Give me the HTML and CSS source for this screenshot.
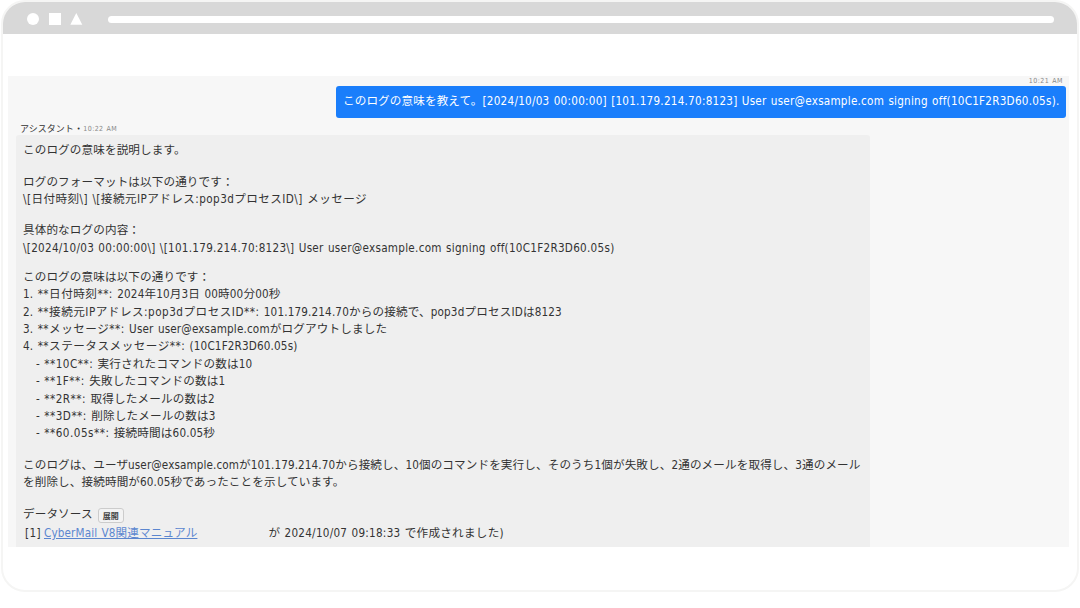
FILE: index.html
```html
<!DOCTYPE html>
<html lang="ja">
<head>
    <meta charset="UTF-8">
    <meta name="viewport" content="width=device-width, initial-scale=1.0">
    <title>アシスタント</title>
    <link rel="stylesheet" href="styles.css">
</head>
<body>
    <div class="window">
        <div class="titlebar">
            <svg class="shapes" width="56" height="14" viewBox="0 0 56 14" fill="#fff">
                <circle cx="6" cy="7" r="6"/>
                <rect x="22" y="1" width="12" height="12"/>
                <path d="M49.3 1L55.3 12.8H43.3z"/>
            </svg>
            <div class="address"></div>
        </div>
        <div class="chat">
            <div class="user-time">10:21 AM</div>
            <div class="user-message"><span>このログの意味を教えて。</span><span class="log">[2024/10/03 00:00:00] [101.179.214.70:8123] User user@exsample.com signing off(10C1F2R3D60.05s).</span></div>
            <div class="sender"><span>アシスタント</span> <span class="dot">•</span> <span class="time">10:22 AM</span></div>
            <div class="answer">
                <p>このログの意味を説明します。</p>
                <p>ログのフォーマットは以下の通りです：<br>
                <span class="format">\[日付時刻\] \[接続元IPアドレス:pop3dプロセスID\] メッセージ</span></p>
                <p class="detail">具体的なログの内容：<br>
                <span class="entry">\[2024/10/03 00:00:00\] \[101.179.214.70:8123\] User user@exsample.com signing off(10C1F2R3D60.05s)</span></p>
                <div class="list">
                    <div>このログの意味は以下の通りです：</div>
                    <div class="item">1. <span>**日付時刻**:</span> 2024年10月3日 00時00分00秒</div>
                    <div class="item">2. <span>**接続元IPアドレス:pop3dプロセスID**:</span> 101.179.214.70からの接続で、pop3dプロセスIDは8123</div>
                    <div class="item">3. <span>**メッセージ**:</span> User user@exsample.comがログアウトしました</div>
                    <div class="item">4. <span>**ステータスメッセージ**:</span> (10C1F2R3D60.05s)</div>
                    <div class="item sub">- <span>**10C**:</span> 実行されたコマンドの数は10</div>
                    <div class="item sub">- <span>**1F**:</span> 失敗したコマンドの数は1</div>
                    <div class="item sub">- <span>**2R**:</span> 取得したメールの数は2</div>
                    <div class="item sub">- <span>**3D**:</span> 削除したメールの数は3</div>
                    <div class="item sub">- <span>**60.05s**:</span> 接続時間は60.05秒</div>
                </div>
                <p>このログは、ユーザuser@exsample.comが101.179.214.70から接続し、10個のコマンドを実行し、そのうち1個が失敗し、2通のメールを取得し、3通のメール<br>
                を削除し、接続時間が60.05秒であったことを示しています。</p>
                <div class="source-head">データソース <button class="expand">展開</button></div>
                <div class="source"><span class="number">[1]</span><a href="#">CyberMail V8関連マニュアル</a><span class="created">が 2024/10/07 09:18:33 で作成されました)</span></div>
            </div>
        </div>
    </div>
</body>
</html>
```

FILE: styles.css
```css
* { box-sizing: border-box; }
body { margin: 0; background: #fff; color: #333; font-family: "DejaVu Sans Condensed", "DejaVu Sans", "Noto Sans CJK JP", sans-serif; font-size: 11.6px; line-height: 17.4px; font-stretch: condensed; letter-spacing: 0.11px; word-spacing: 0.7px; }
.window { width: 1078px; height: 592px; margin-left: 1px; border: 2px solid #f5f5f4; border-radius: 24px; background: #fff; overflow: hidden; }
.titlebar { display: flex; align-items: center; height: 32px; padding: 2px 23px 0 24px; background: #d8d8d8; }
.shapes { margin-right: 25px; }
.address { flex: 1; height: 7px; border-radius: 4px; background: #fff; }
.chat { display: flex; flex-direction: column; height: 471px; margin: 42px 8px 0 5px; padding: 0 3px 0 8px; background: #f7f7f7; overflow: hidden; white-space: nowrap; }
.user-time { height: 10px; padding-right: 3px; font-size: 7px; line-height: 11px; letter-spacing: 0.45px; text-align: right; color: #888; }
.user-message { display: flex; align-self: flex-end; justify-content: space-between; width: 730px; height: 32px; padding: 0 7px; border-radius: 3px; background: #1a7efb; color: #fff; line-height: 31px; }
.log { letter-spacing: 0.25px; }
.sender { display: flex; align-items: center; gap: 3px; height: 17px; padding: 6px 0 0 4px; font-size: 9px; line-height: 9px; letter-spacing: 0; }
.dot { font-size: 7px; }
.time { font-size: 7px; letter-spacing: 0.4px; color: #888; }
.answer { width: 854px; flex: 1; padding: 7.2px 7px 0; border-radius: 3px 3px 0 0; background: #efefef; }
.answer p { margin: 0 0 14px; }
.format { letter-spacing: 0.43px; }
.entry { letter-spacing: 0.28px; }
.answer .detail { margin-bottom: 11.5px; }
.list { margin-bottom: 14px; }
.item { letter-spacing: 0.16px; word-spacing: 0.9px; }
.item span { letter-spacing: 0.5px; }
.sub { padding-left: 13px; }
.source-head { display: flex; align-items: center; gap: 5px; height: 18px; }
.expand { width: 26px; height: 15px; margin-top: 2px; padding: 0; border: 1px solid #ccc; border-radius: 3px; background: #f3f3f3; font: bold 8px/12px "Noto Sans CJK JP", sans-serif; color: #444; }
.source { display: flex; padding: 1.5px 0 0 2px; }
.number { letter-spacing: 0.4px; }
.source a { margin-left: 3px; color: #5b86cf; letter-spacing: 0.15px; }
.created { margin-left: 71px; letter-spacing: 0.26px; }
```
